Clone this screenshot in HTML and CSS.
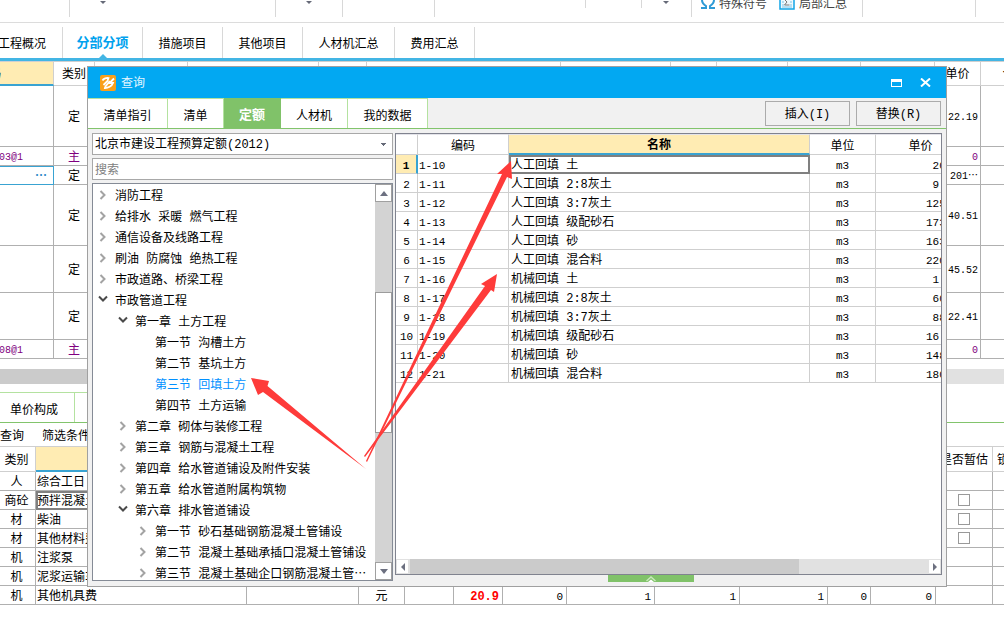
FILE: index.html
```html
<!DOCTYPE html>
<html lang="zh-CN">
<head>
<meta charset="utf-8">
<title>查询 - 定额</title>
<link rel="stylesheet" href="styles.css">
</head>
<body>
<svg class="defs" width="0" height="0" aria-hidden="true">
  <symbol id="right" viewBox="0 0 8 10"><path d="M1.5 1 5.5 5l-4 4" fill="none" stroke="#a3a3a3" stroke-width="2"/></symbol>
  <symbol id="down" viewBox="0 0 10 8"><path d="M1 1.5l4 4 4-4" fill="none" stroke="#4a4a4a" stroke-width="2"/></symbol>
</svg>

<main class="app">
  <header class="ribbon">
    <div class="group g1"></div>
    <div class="group g2"><i class="caret c1"></i></div>
    <div class="group g3"><i class="caret c2"></i></div>
    <div class="group g4"></div>
    <div class="group g5 short"></div>
    <div class="group g6 short"></div>
    <div class="group g7"><i class="caret c3"></i></div>
    <div class="group g8">
      <button class="tool" type="button"><svg width="14" height="16" viewBox="0 0 14 16"><path d="M0 14h5V12C2 10 1 8 1 6a6 5.500 0 0 1 12 0c0 2-1 4-4 6v2h5" fill="none" stroke="#2e9bd6" stroke-width="2"/></svg>特殊符号</button>
      <button class="tool" type="button"><svg width="16" height="16" viewBox="0 0 16 16"><path d="M1 0v15h14V0" fill="#eef8fc" stroke="#12a5e6" stroke-width="1.500"/><path d="M3 5h2m6 0h2M3 8h2m6 0h2M3 11h2m6 0h2M3 13h10" stroke="#7cc6ea"/><path d="M10.500 5.500h-5L8 8l-2.500 3h5" fill="none" stroke="#777"/></svg>局部汇总</button>
    </div>
    <div class="group g9"></div>
  </header>

  <nav class="tabs">
    <button type="button" class="first">工程概况</button>
    <button type="button" class="active">分部分项</button>
    <button type="button">措施项目</button>
    <button type="button">其他项目</button>
    <button type="button" class="wide">人材机汇总</button>
    <button type="button">费用汇总</button>
  </nav>

  <section class="upper">
    <table class="grid items">
      <colgroup><col class="w129"><col class="w41"><col class="w93"><col class="w131"><col class="w48"><col class="w194"><col class="w110"><col class="w46"><col class="w71"><col class="w73"><col class="w74"><col class="w46"><col class="w68"></colgroup>
      <thead><tr><th class="picked">编码</th><th>类别</th><th></th><th></th><th></th><th></th><th></th><th></th><th></th><th></th><th></th><th>单价</th><th>合价</th></tr></thead>
      <tbody>
        <tr class="h61"><td></td><td class="mid">定</td><td colspan="9"></td><td class="num">22.19</td><td></td></tr>
        <tr class="h19 main"><td class="code">03@1</td><td class="mid">主</td><td colspan="9"></td><td class="num">0</td><td></td></tr>
        <tr class="h19"><td class="editing">⋯</td><td class="mid">定</td><td colspan="9"></td><td class="num">201⋯</td><td></td></tr>
        <tr class="h61"><td></td><td class="mid">定</td><td colspan="9"></td><td class="num">40.51</td><td></td></tr>
        <tr class="h47"><td></td><td class="mid">定</td><td colspan="9"></td><td class="num">45.52</td><td></td></tr>
        <tr class="h47"><td></td><td class="mid">定</td><td colspan="9"></td><td class="num">22.41</td><td></td></tr>
        <tr class="h19 main"><td class="code">08@1</td><td class="mid">主</td><td colspan="9"></td><td class="num">0</td><td></td></tr>
      </tbody>
    </table>
    <div class="scroll-line"><div class="scroll-thumb"></div></div>
  </section>

  <section class="lower">
    <nav class="subtabs"><button type="button">单价构成</button><span class="next"></span></nav>
    <div class="filters"><button type="button">查询</button><button type="button">筛选条件</button></div>
    <table class="grid parts">
      <colgroup><col class="w38"><col class="w211"><col class="w112"><col class="w46"><col class="w49"><col class="w49"><col class="w64"><col class="w88"><col class="w85"><col class="w88"><col class="w43"><col class="w65"><col class="w57"><col class="w36"></colgroup>
      <thead><tr><th>类别</th><th class="picked"></th><th colspan="10"></th><th>是否暂估</th><th class="lock">锁定</th></tr></thead>
      <tbody>
        <tr><td class="mid">人</td><td>综合工日</td><td colspan="10"></td><td></td><td></td></tr>
        <tr><td class="mid">商砼</td><td class="current">预拌混凝土</td><td colspan="10"></td><td class="check"><input type="checkbox" aria-label="是否暂估 预拌混凝土"></td><td></td></tr>
        <tr><td class="mid">材</td><td>柴油</td><td colspan="10"></td><td class="check"><input type="checkbox" aria-label="是否暂估 柴油"></td><td></td></tr>
        <tr><td class="mid">材</td><td>其他材料费</td><td colspan="10"></td><td class="check"><input type="checkbox" aria-label="是否暂估 其他材料费"></td><td></td></tr>
        <tr><td class="mid">机</td><td>注浆泵</td><td colspan="10"></td><td></td><td></td></tr>
        <tr><td class="mid">机</td><td>泥浆运输车</td><td colspan="10"></td><td></td><td></td></tr>
        <tr><td class="mid">机</td><td>其他机具费</td><td></td><td class="mid">元</td><td></td><td class="num hot">20.9</td><td class="num">0</td><td class="num">1</td><td class="num">1</td><td class="num">1</td><td class="num">0</td><td class="num">0</td><td></td><td></td></tr>
      </tbody>
    </table>
  </section>

  <section class="dialog" role="dialog" aria-label="查询">
    <header class="title">
      <svg width="16" height="16" viewBox="0 0 16 16"><rect width="16" height="16" rx="2" fill="#f9a01b"/><path d="M2.500 5.500c1-2 4-3 6-2.500l-1 3-4 4M4 13c4 .5 8-2 9-5H9.500L14 3.500M5 12l5-6" fill="none" stroke="#fff" stroke-width="1.800"/></svg>
      <h1>查询</h1>
      <button type="button" aria-label="最大化"><svg width="11" height="8" viewBox="0 0 11 8"><path d="M0 0h11v8H0zM1 3v4h9V3z" fill="#fff" fill-rule="evenodd"/></svg></button>
      <button type="button" aria-label="关闭"><svg width="11" height="9" viewBox="0 0 11 9"><path d="M1 .5l9 8M10 .5l-9 8" stroke="#fff" stroke-width="2"/></svg></button>
    </header>
    <div class="bar">
      <nav class="modes">
        <button type="button" class="m80">清单指引</button><button type="button" class="m56">清单</button><button type="button" class="m57 on">定额</button><button type="button" class="m67">人材机</button><button type="button" class="m80">我的数据</button>
      </nav>
      <button class="push" type="button">插入(I)</button>
      <button class="push" type="button">替换(R)</button>
    </div>
    <div class="content">
      <div class="side">
        <select aria-label="定额库"><option>北京市建设工程预算定额(2012)</option></select>
        <input class="search" type="text" placeholder="搜索" aria-label="搜索">
        <div class="tree">
          <ul>
            <li><svg><use href="#right"/></svg>消防工程</li>
            <li><svg><use href="#right"/></svg>给排水 采暖 燃气工程</li>
            <li><svg><use href="#right"/></svg>通信设备及线路工程</li>
            <li><svg><use href="#right"/></svg>刷油 防腐蚀 绝热工程</li>
            <li><svg><use href="#right"/></svg>市政道路、桥梁工程</li>
            <li><svg class="open"><use href="#down"/></svg>市政管道工程
              <ul>
                <li><svg class="open"><use href="#down"/></svg>第一章 土方工程
                  <ul>
                    <li class="leaf">第一节 沟槽土方</li>
                    <li class="leaf">第二节 基坑土方</li>
                    <li class="leaf chosen">第三节 回填土方</li>
                    <li class="leaf">第四节 土方运输</li>
                  </ul>
                </li>
                <li><svg><use href="#right"/></svg>第二章 砌体与装修工程</li>
                <li><svg><use href="#right"/></svg>第三章 钢筋与混凝土工程</li>
                <li><svg><use href="#right"/></svg>第四章 给水管道铺设及附件安装</li>
                <li><svg><use href="#right"/></svg>第五章 给水管道附属构筑物</li>
                <li><svg class="open"><use href="#down"/></svg>第六章 排水管道铺设
                  <ul>
                    <li><svg><use href="#right"/></svg>第一节 砂石基础钢筋混凝土管铺设</li>
                    <li><svg><use href="#right"/></svg>第二节 混凝土基础承插口混凝土管铺设</li>
                    <li><svg><use href="#right"/></svg>第三节 混凝土基础企口钢筋混凝土管⋯</li>
                  </ul>
                </li>
              </ul>
            </li>
          </ul>
          <div class="vbar">
            <button type="button" aria-label="向上"><i class="tri up"></i></button>
            <div class="before"></div><div class="vthumb"></div><div class="after"></div>
            <button type="button" aria-label="向下"><i class="tri dn"></i></button>
          </div>
        </div>
      </div>
      <div class="results">
        <div class="panel">
          <div class="view">
            <table class="grid quota">
              <colgroup><col class="w22"><col class="w91"><col><col class="w66"><col class="w65"></colgroup>
              <thead><tr><th></th><th>编码</th><th class="picked">名称</th><th>单位</th><th class="price">单价</th></tr></thead>
              <tbody>
                <tr><td class="idx now">1</td><td class="no">1-10</td><td class="current">人工回填 土</td><td class="unit">m3</td><td class="cost">&nbsp;20</td></tr>
                <tr><td class="idx">2</td><td class="no">1-11</td><td>人工回填 2:8灰土</td><td class="unit">m3</td><td class="cost">&nbsp;9</td></tr>
                <tr><td class="idx">3</td><td class="no">1-12</td><td>人工回填 3:7灰土</td><td class="unit">m3</td><td class="cost">125</td></tr>
                <tr><td class="idx">4</td><td class="no">1-13</td><td>人工回填 级配砂石</td><td class="unit">m3</td><td class="cost">173</td></tr>
                <tr><td class="idx">5</td><td class="no">1-14</td><td>人工回填 砂</td><td class="unit">m3</td><td class="cost">163</td></tr>
                <tr><td class="idx">6</td><td class="no">1-15</td><td>人工回填 混合料</td><td class="unit">m3</td><td class="cost">220</td></tr>
                <tr><td class="idx">7</td><td class="no">1-16</td><td>机械回填 土</td><td class="unit">m3</td><td class="cost">&nbsp;1</td></tr>
                <tr><td class="idx">8</td><td class="no">1-17</td><td>机械回填 2:8灰土</td><td class="unit">m3</td><td class="cost">&nbsp;60</td></tr>
                <tr><td class="idx">9</td><td class="no">1-18</td><td>机械回填 3:7灰土</td><td class="unit">m3</td><td class="cost">&nbsp;88</td></tr>
                <tr><td class="idx">10</td><td class="no">1-19</td><td>机械回填 级配砂石</td><td class="unit">m3</td><td class="cost">16</td></tr>
                <tr><td class="idx">11</td><td class="no">1-20</td><td>机械回填 砂</td><td class="unit">m3</td><td class="cost">148</td></tr>
                <tr><td class="idx">12</td><td class="no">1-21</td><td>机械回填 混合料</td><td class="unit">m3</td><td class="cost">180</td></tr>
              </tbody>
            </table>
          </div>
          <div class="hbar">
            <button type="button" aria-label="向左"><i class="tri lf"></i></button>
            <div class="htrack"><div class="hthumb"></div></div>
            <button type="button" aria-label="向右"><i class="tri rt"></i></button>
          </div>
        </div>
        <button class="handle" type="button" aria-label="展开"><svg width="12" height="6" viewBox="0 0 12 6"><path d="M1.500 5 6 1l4.500 4" fill="none" stroke="#c9e8bc" stroke-width="1.500"/><path d="M3 6l3-2.500L9 6z" fill="#fff"/></svg></button>
      </div>
    </div>
  </section>

  <svg class="arrows" width="280" height="330" viewBox="240 150 280 330" aria-hidden="true">
    <g fill="#fe3b3a">
      <path d="M251 378 269 381 267.500 386 366 469 263 392 258 395z"/>
      <path d="M511 161 512 179 507 177 367 462 366 461 502 174 497 174z"/>
      <path d="M497 274 494 292 491 290 365 457 364 456 485 286 481 284z"/>
    </g>
  </svg>
</main>
</body>
</html>
```
FILE: styles.css
```css
* { box-sizing: border-box; }
body {
  margin: 0;
  background: #fff;
  color: #000;
  font: 12px/16px "Liberation Mono", "Noto Sans CJK SC", monospace;
}
button, input, select { font: inherit; color: inherit; }
button { margin: 0; padding: 0; border: 0; background: none; white-space: nowrap; }
ul { margin: 0; padding: 0; list-style: none; }
.defs { display: block; }
.app { position: relative; height: 100vh; overflow: hidden; }

/* ribbon */
.ribbon { display: flex; align-items: flex-start; height: 23px; border-bottom: 1px solid #dcdcdc; overflow: hidden; }
.group { display: flex; flex: none; height: 17px; border-right: 1px solid #d8d8d8; }
.group.short { height: 8px; }
.g1 { width: 70px; }
.g2 { width: 206px; }
.g3 { width: 67px; }
.g4 { width: 92px; }
.g5 { width: 151px; }
.g6 { width: 56px; }
.g7 { width: 50px; }
.g8 { width: 171px; padding-left: 9px; gap: 12px; align-items: flex-start; }
.g9 { width: 113px; }
.caret { height: 0; margin-top: 1px; border: 3px solid transparent; border-top-color: #666a78; border-bottom: 0; }
.c1, .c2 { margin-left: 30px; }
.c3 { margin-left: 21px; }
.tool { display: flex; align-items: flex-start; gap: 4px; height: 22px; margin-top: -6px; color: #444; line-height: 22px; }

/* main tabs */
.tabs { display: flex; align-items: flex-end; height: 38px; border-bottom: 3px solid #43b5e4; }
.tabs button { position: relative; width: 80px; height: 31px; padding-top: 4px; border-right: 1px solid #d8d8d8; }
.tabs .first { display: flex; justify-content: flex-end; align-items: center; width: 63px; padding-right: 16px; }
.tabs .wide { width: 92px; }
.tabs .active { padding-top: 2px; color: #00a2ee; font-size: 13px; font-weight: bold; }
.tabs .active::after { content: ""; position: absolute; left: 36px; bottom: 0; border: 4px solid transparent; border-bottom-color: #43b5e4; border-top: 0; }

/* grids */
.grid { border-spacing: 0; table-layout: fixed; }
.grid th, .grid td { padding: 4px 0 0; overflow: hidden; white-space: nowrap; line-height: 14px; border-right: 1px solid #b0b0b0; border-bottom: 1px solid #b0b0b0; }
.grid th { font-weight: normal; border-color: #cfcfcf; }
.grid .picked { background: #ffecb3; border-bottom: 2px solid #39a3d2; font-weight: bold; }
.grid .mid { text-align: center; padding-left: 0; }
.grid .num { font-size: 11px; text-align: right; padding-right: 3px; }
.w22 { width: 22px; } .w36 { width: 36px; } .w38 { width: 38px; } .w41 { width: 41px; } .w43 { width: 43px; }
.w46 { width: 46px; } .w48 { width: 48px; } .w49 { width: 49px; } .w57 { width: 57px; } .w64 { width: 64px; }
.w65 { width: 65px; } .w66 { width: 66px; } .w68 { width: 68px; } .w71 { width: 71px; } .w73 { width: 73px; }
.w74 { width: 74px; } .w85 { width: 85px; } .w88 { width: 88px; } .w91 { width: 91px; } .w93 { width: 93px; }
.w110 { width: 110px; } .w112 { width: 112px; } .w129 { width: 129px; } .w131 { width: 131px; }
.w194 { width: 194px; } .w211 { width: 211px; }

.items { width: 1124px; margin-left: -75px; }
.items th { height: 25px; padding-top: 3px; border-top: 1px solid #cfcfcf; }
.h61 { height: 61px; } .h19 { height: 19px; } .h47 { height: 47px; }
.main { color: #800080; }
.items .code { padding-left: 74px; font-size: 10px; }
.items .num { padding-right: 2px; font-size: 10px; }
.items .editing { border: 1px solid #39a3d2; text-align: right; padding: 2px 6px 0 0; color: #2b87c8; font-weight: bold; }
.scroll-line { height: 15px; margin-top: 10px; background: #e1e1e1; }
.scroll-thumb { width: 50%; height: 15px; background: #cbcbcb; }

/* lower pane */
.lower { padding-top: 8px; }
.subtabs { display: flex; height: 31px; border-bottom: 1px solid #82c46c; }
.subtabs button { width: 75px; padding: 6px 6px 0 0; border-top: 1px solid #b4e2a0; border-right: 1px solid #b4e2a0; }
.subtabs .next { width: 80px; border-top: 1px solid #b4e2a0; }
.filters { display: flex; gap: 18px; height: 24px; border-bottom: 1px solid #cfcfcf; }
.filters button { padding-top: 4px; }
.parts { width: 1031px; margin-left: -2px; }
.parts th { height: 25px; }
.parts tbody tr { height: 19px; }
.parts td { padding-left: 1px; }
.parts .lock { padding-left: 4px; text-align: left; }
.parts .check { padding: 0; }
.grid .current { outline: 2px solid #808080; outline-offset: -2px; }
.parts .hot { color: #f00; font-weight: bold; font-size: 12px; }
input[type="checkbox"] { appearance: none; display: block; width: 12px; height: 12px; margin: 0 auto; border: 1px solid #999; background: #fff; }

/* dialog */
.dialog { position: absolute; top: 66px; left: 87px; right: 57px; border: 1px solid #a0a0a0; background: #f1f1f1; }
.title { display: flex; align-items: center; height: 31px; padding: 0 15px 0 12px; background: #02a8f2; color: #e4f6ff; }
.title h1 { flex: 1; margin: 0 0 0 5px; padding-top: 3px; font-size: 12px; font-weight: normal; }
.title button { display: flex; margin-left: 18px; }
.bar { display: flex; align-items: center; height: 31px; padding-right: 5px; border-bottom: 1px solid #82c46c; }
.modes { display: flex; height: 30px; margin-right: auto; }
.modes button { padding-top: 6px; border-top: 1px solid #b4e2a0; border-right: 1px solid #b4e2a0; background: #fff; }
.modes .on { padding-top: 4px; background: #80c269; color: #fff; font-size: 13px; font-weight: bold; border-color: #80c269; }
.m80 { width: 80px; } .m56 { width: 56px; } .m57 { width: 57px; } .m67 { width: 67px; }
.push { width: 85px; height: 25px; margin-left: 6px; padding-top: 4px; border: 1px solid #ababab; }

.content { display: flex; gap: 2px; padding: 4px; }
.side { display: flex; flex-direction: column; flex: none; width: 301px; gap: 3px; }
.side select, .search { width: 100%; height: 22px; border: 1px solid #a8a8a8; border-radius: 0; background: #fff; padding: 3px 2px 0; outline: 0; }
.side select { padding-top: 2px; appearance: none; background: linear-gradient(#666a78, #666a78) no-repeat right 6px top 9px / 5px 1px, linear-gradient(#666a78, #666a78) no-repeat right 7px top 10px / 3px 1px, linear-gradient(#666a78, #666a78) no-repeat right 8px top 11px / 1px 1px, #fff; }
.search::placeholder { color: #808080; opacity: 1; }
.tree { display: flex; height: 398px; border: 1px solid #858b96; background: #fff; overflow: hidden; }
.tree ul { min-width: 0; }
.tree > ul { flex: 1; padding: 3px 0 0 5px; overflow: hidden; }
.tree li { line-height: 21px; white-space: nowrap; }
.tree li ul { padding-left: 20px; }
.tree svg { width: 8px; height: 10px; margin: 0 8px 0 1px; vertical-align: 0; }
.tree svg.open { width: 10px; height: 8px; margin: 0 7px 0 0; vertical-align: 2px; }
.tree .leaf { padding-left: 17px; }
.tree .chosen { color: #0090ff; }
.vbar { display: flex; flex-direction: column; flex: none; width: 17px; background: #d3d3d3; }
.vbar button { display: flex; align-items: center; justify-content: center; height: 18px; border: 1px solid #a0a0a0; background: #fff; }
.before { flex: 91; }
.vthumb { flex: 140; border: 1px solid #9c9c9c; background: #fff; }
.after { flex: 130; }
.tri { border: 4px solid transparent; }
.up { border-bottom: 5px solid #6c7080; border-top: 0; }
.dn { border-top: 5px solid #6c7080; border-bottom: 0; }
.lf { border-right-color: #6c7080; border-left: 0; }
.rt { border-left-color: #6c7080; border-right: 0; }

.results { display: flex; flex-direction: column; flex: 1; min-width: 0; }
.panel { border: 1px solid #80838f; background: #fff; }
.view { height: 425px; overflow: hidden; }
.quota { width: 100%; }
.quota th { height: 21px; border-top: 1px solid #e4e4ea; }
.quota td { height: 19px; padding-left: 2px; border-color: #cfcfcf; }
.quota tr > :last-child { border-right: 0; }
.quota .idx, .quota .no, .quota .unit, .quota .cost { padding: 3px 0 0; font-size: 11px; }
.quota .idx, .quota .unit { text-align: center; }
.quota .no { padding-left: 1px; }
.quota .cost { padding-left: 50px; }
.quota .now { background: #ffecb3; border-right: 2px solid #39a3d2; font-weight: bold; }
.quota .price { padding-left: 24px; }
.hbar { display: flex; height: 15px; background: #e1e1e1; }
.hbar button { display: flex; align-items: center; justify-content: center; width: 13px; border: 1px solid #e1e1e1; background: #fff; }
.htrack { flex: 1; padding-left: 1px; }
.hthumb { width: 75%; height: 15px; background: #cbcbcb; }
.handle { display: flex; align-items: flex-end; justify-content: center; width: 86px; height: 7px; margin-left: 213px; background: #80c269; }

.arrows { position: absolute; left: 240px; top: 150px; pointer-events: none; }
```
